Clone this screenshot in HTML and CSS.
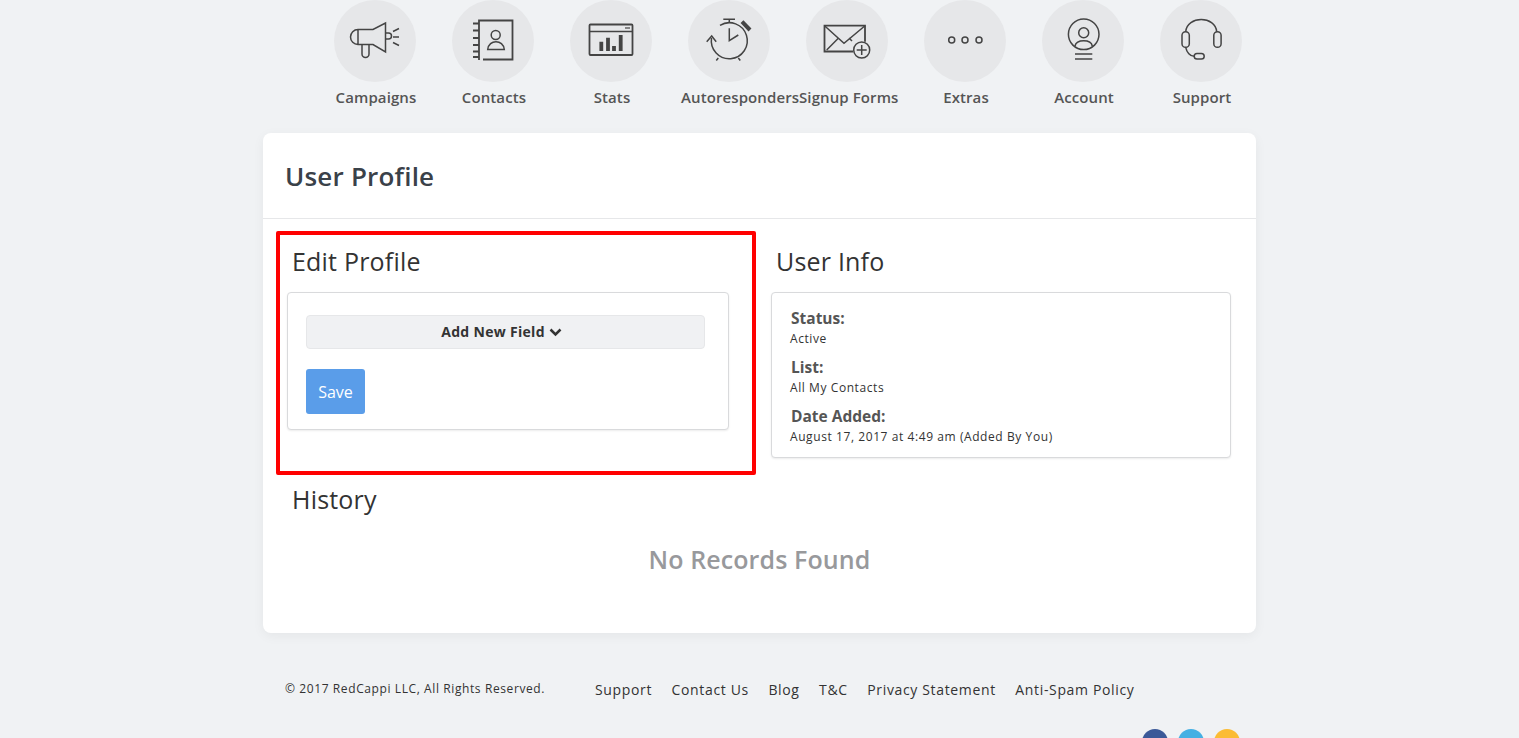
FILE: index.html
```html
<!DOCTYPE html>
<html>
  <head>
    <title>User Profile</title>
    <link rel="stylesheet" href="styles.css">
  </head>
  <body>
    <nav class="topnav">
      <a class="navitem">
        <span class="navcircle">
          <svg class="navicon" viewBox="0 0 82 82">
            <path d="M24 29.500H39L51.500 23V52L39 44.500H24A7.500 7.500 0 0 1 24 29.500V44.500"/>
            <path d="M28 44.500V54a3.500 3.500 0 0 0 7 0V44.500"/>
            <path d="M51.500 33h3a3 3 0 0 1 0 6h-3"/>
            <path d="M59 31.500l6-3M59 37h6M59 42.500l6 3"/>
          </svg>
        </span>
        <span class="navlabel">Campaigns</span>
      </a>
      <a class="navitem">
        <span class="navcircle">
          <svg class="navicon" viewBox="0 0 82 82">
            <path d="M27 60V20.500H60.500V59.500H31" stroke-width="1.800"/>
            <path d="M21 23.500h6M21 30.500h6M21 38h6M21 45h6M21 51.500h6M21 57h6" stroke-width="1.800"/>
            <circle cx="43.700" cy="35" r="4.500"/>
            <path d="M35.700 49.500c1-10.500 15.600-10.500 16.600 0z"/>
          </svg>
        </span>
        <span class="navlabel">Contacts</span>
      </a>
      <a class="navitem">
        <span class="navcircle">
          <svg class="navicon" viewBox="0 0 82 82">
            <rect x="19.500" y="24.500" width="43" height="30.500" rx="1" stroke-width="1.800"/>
            <path d="M19.500 31.500h43"/>
            <path d="M55 28h5" stroke-width="1.200"/>
            <path d="M31.300 51v-9.300M38 51V37.700M44 51v-5M50.700 51V35" stroke-width="3.800"/>
          </svg>
        </span>
        <span class="navlabel">Stats</span>
      </a>
      <a class="navitem">
        <span class="navcircle">
          <svg class="navicon" viewBox="0 0 82 82">
            <path d="M23.500 38A18 18 0 1 0 32 25.300"/>
            <path d="M18.700 41.700l5-5.700 4.500 5.700"/>
            <path d="M41.300 28.300v12.400l9-5.700"/>
            <path d="M41.300 22.700V19.500M35.300 19.300H47"/>
            <path d="M54 21.700l8 8.300" stroke-width="4"/>
            <path d="M30.300 58l-2 2.500M50.300 58l2 2.500"/>
          </svg>
        </span>
        <span class="navlabel">Autoresponders</span>
      </a>
      <a class="navitem">
        <span class="navcircle">
          <svg class="navicon" viewBox="0 0 82 82">
            <path d="M47.300 51.500H18.500V25.700H59V41.700" stroke-width="1.800"/>
            <path d="M18.500 25.700L38 43.300L59 25.700M20.700 50L32.300 38.300M46 41l-3-3"/>
            <circle cx="55.700" cy="50" r="8"/>
            <path d="M55.700 45v10M50.700 50h10"/>
          </svg>
        </span>
        <span class="navlabel">Signup Forms</span>
      </a>
      <a class="navitem">
        <span class="navcircle">
          <svg class="navicon" viewBox="0 0 82 82">
            <circle cx="27.700" cy="40" r="3"/>
            <circle cx="41" cy="40" r="3"/>
            <circle cx="55" cy="40" r="3"/>
          </svg>
        </span>
        <span class="navlabel">Extras</span>
      </a>
      <a class="navitem">
        <span class="navcircle">
          <svg class="navicon" viewBox="0 0 82 82">
            <circle cx="41.700" cy="34.300" r="15.300"/>
            <circle cx="41.700" cy="32.700" r="5"/>
            <path d="M33 46c1.500-7 16-7 17.300 0"/>
            <path d="M33 54h17.300M33 59h17.300"/>
          </svg>
        </span>
        <span class="navlabel">Account</span>
      </a>
      <a class="navitem">
        <span class="navcircle">
          <svg class="navicon" viewBox="0 0 82 82">
            <path d="M25.700 31.700C27 15.500 55.500 15.500 56.700 31.700"/>
            <rect x="22" y="31.700" width="7.300" height="15.600" rx="3.600"/>
            <rect x="53.800" y="31.700" width="7.300" height="15.600" rx="3.600"/>
            <path d="M25.700 47.300c1 5 4.500 9 8.500 9"/>
            <rect x="34.200" y="53.500" width="10" height="5.600" rx="2.800"/>
          </svg>
        </span>
        <span class="navlabel">Support</span>
      </a>
    </nav>

    <main class="card">
      <h1 class="pagetitle">User Profile</h1>
      <div class="columns">
        <section class="editcol">
          <h2 class="sectitle">Edit Profile</h2>
          <div class="box editbox">
            <button class="addfield">Add New Field
              <svg width="13" height="9" viewBox="0 0 13 9" fill="none" stroke="#333" stroke-width="2.500"><path d="M1.500 1.500l5 5 5-5"/></svg>
            </button>
            <button class="savebtn">Save</button>
          </div>
        </section>
        <section class="infocol">
          <h2 class="sectitle">User Info</h2>
          <div class="box infobox">
            <div class="infolabel">Status:</div>
            <div class="infovalue">Active</div>
            <div class="infolabel">List:</div>
            <div class="infovalue">All My Contacts</div>
            <div class="infolabel">Date Added:</div>
            <div class="infovalue">August 17, 2017 at 4:49 am (Added By You)</div>
          </div>
        </section>
      </div>
      <h2 class="sectitle history">History</h2>
      <p class="norecords">No Records Found</p>
    </main>

    <footer class="footer">
      <div class="footrow">
        <span class="copyright">© 2017 RedCappi LLC, All Rights Reserved.</span>
        <div class="footlinks">
          <a>Support</a>
          <a>Contact Us</a>
          <a>Blog</a>
          <a>T&amp;C</a>
          <a>Privacy Statement</a>
          <a>Anti-Spam Policy</a>
        </div>
      </div>
      <div class="social">
        <span class="dot fb"></span>
        <span class="dot tw"></span>
        <span class="dot rss"></span>
      </div>
    </footer>
  </body>
</html>
```

FILE: styles.css
```css
html,
body {
  height: 738px;
  overflow: hidden;
}
body {
  background-color: #f0f2f4;
  font-family: "Open Sans", sans-serif;
  color: #333333;
  margin: 0;
}
.topnav {
  display: flex;
  width: 944px;
  margin-left: 316px;
  height: 133px;
}
.navitem {
  width: 98px;
  padding: 0 9px 0 11px;
  white-space: nowrap;
}
.navcircle {
  width: 82px;
  height: 82px;
  margin: 0 8px 0 7px;
  border-radius: 50%;
  background-color: #e6e7e9;
  display: block;
}
.navicon {
  display: block;
  width: 82px;
  height: 82px;
  fill: none;
  stroke: #444444;
  stroke-width: 1.500;
}
.navlabel {
  display: block;
  margin-top: 6px;
  text-align: center;
  font-size: 15px;
  font-weight: 600;
  letter-spacing: 0.100px;
  color: #555555;
  line-height: 19px;
}
.card {
  width: 993px;
  height: 500px;
  margin-left: 263px;
  background-color: #ffffff;
  border-radius: 8px;
  box-shadow: 0px 3px 12px rgba(0, 0, 0, 0.05);
  box-sizing: border-box;
}
.pagetitle {
  margin: 0;
  height: 86px;
  padding: 24px 22px 0;
  box-sizing: border-box;
  border-bottom: 1px solid #e6e7e9;
  font-size: 26px;
  font-weight: 600;
  line-height: 38px;
  letter-spacing: 0.200px;
  color: #3a4149;
}
.columns {
  display: flex;
  padding: 12px 0 0 13px;
}
.editcol {
  width: 480px;
  height: 244px;
  box-sizing: border-box;
  border: 4px solid #ff0000;
  border-radius: 2px;
  padding: 10px 23px 0 7px;
}
.infocol {
  width: 460px;
  margin-left: 15px;
  padding-top: 14px;
}
.sectitle {
  margin: 0 0 14px 5px;
  font-size: 25px;
  font-weight: 400;
  line-height: 33px;
  letter-spacing: 0.200px;
  color: #333333;
}
.box {
  background-color: #ffffff;
  border: 1px solid #d9dadc;
  border-radius: 4px;
  box-shadow: 0px 1px 2px rgba(0, 0, 0, 0.08);
  box-sizing: border-box;
}
.editbox {
  height: 138px;
  padding: 22px 23px 0 18px;
}
.addfield {
  display: block;
  width: 100%;
  height: 34px;
  padding: 0 8px 2px 0;
  background-color: #f0f1f3;
  border: 1px solid #e6e7e9;
  border-radius: 4px;
  font-family: "Open Sans", sans-serif;
  font-size: 14px;
  font-weight: 700;
  letter-spacing: 0.300px;
  color: #333333;
}
.savebtn {
  display: block;
  margin-top: 20px;
  width: 59px;
  height: 45px;
  padding: 0;
  background-color: #5a9de9;
  border: none;
  border-radius: 3px;
  font-family: "Open Sans", sans-serif;
  font-size: 16px;
  color: #ffffff;
}
.infobox {
  width: 460px;
  height: 166px;
  padding: 15px 18px;
}
.infolabel {
  margin-left: 1px;
  font-size: 15.500px;
  font-weight: 700;
  line-height: 20px;
  color: #555555;
}
.infovalue {
  font-size: 12px;
  line-height: 20px;
  margin: 1px 0 8px;
  letter-spacing: 0.580px;
}
.history {
  margin: 8px 0 0 29px;
}
.norecords {
  margin: 27px 0 0;
  text-align: center;
  font-size: 25px;
  font-weight: 600;
  line-height: 33px;
  letter-spacing: 0.100px;
  color: #98999c;
}
.footer {
  width: 993px;
  margin-left: 263px;
}
.footrow {
  display: flex;
  padding: 47px 0 0 22px;
}
.copyright {
  width: 310px;
  font-size: 12px;
  line-height: 18px;
  letter-spacing: 0.600px;
}
.footlinks {
  display: flex;
  gap: 19.500px;
  font-size: 14px;
  line-height: 20px;
  letter-spacing: 0.650px;
}
.social {
  display: flex;
  justify-content: flex-end;
  gap: 10px;
  margin-top: 29px;
  padding-right: 16px;
}
.dot {
  width: 26px;
  height: 26px;
  border-radius: 50%;
}
.fb {
  background-color: #3b5998;
}
.tw {
  background-color: #45b0e3;
}
.rss {
  background-color: #fbbc34;
}
```
